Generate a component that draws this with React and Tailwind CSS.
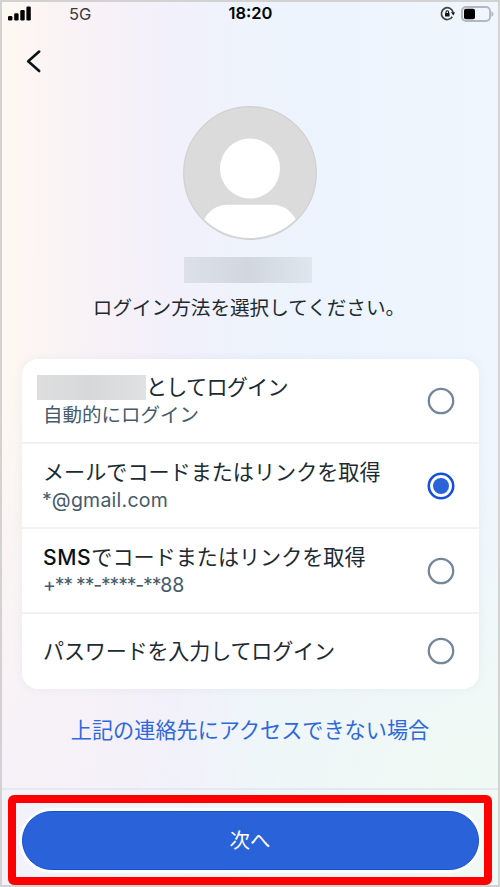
import React, { useState } from 'react';
import clsx from 'clsx';

const OPTIONS = [
  { id: 'auto',     title: 'としてログイン', sub: '自動的にログイン', masked: true, titleClass: 'tracking-[-0.75px]' },
  { id: 'email',    title: 'メールでコードまたはリンクを取得', sub: '*@gmail.com', subClass: 'tracking-[0.25px] -ml-px' },
  { id: 'sms',      prefix: 'SMS', title: 'でコードまたはリンクを取得', sub: '+** **-****-**', subEnd: '88', subClass: 'tracking-[-1.2px]' },
  { id: 'password', title: 'パスワードを入力してログイン', titleClass: 'tracking-[-0.2px]' },
];

export default function App() {
  const [selected, setSelected] = useState('email');

  return (
    <div className="w-[500px] h-[887px] overflow-hidden flex flex-col border-2 border-[#d2d2d2] font-['Inter','Noto_Sans_CJK_JP',sans-serif] text-[#1c2b33] bg-[radial-gradient(ellipse_75%_40%_at_100%_92%,#f0faf2_0%,#f0faf200_100%),radial-gradient(ellipse_50%_55%_at_0%_100%,#f3f0f9_0%,#f3f0f900_100%),linear-gradient(to_right,#fef8f2_0%,#fbf4f5_10%,#f6f1f8_24%,#f2f0fb_34%,#eef3fc_50%,#edf4fd_70%,#eff6fe_100%)]">
      <StatusBar />

      {/* Back */}
      <div className="h-[65px] pl-[24px] pt-[25px]">
        <button className="block" aria-label="戻る">
          <svg width="16" height="24" viewBox="0 0 16 24" fill="none">
            <path d="M13.2 2.6L2.2 12.3L13.2 22" stroke="#0a1317" strokeWidth="2.6" strokeLinecap="round" strokeLinejoin="round" />
          </svg>
        </button>
      </div>

      {/* Profile */}
      <div className="flex flex-col items-center pt-[17px]">
        <Avatar />
        <div className="mt-[17px] mr-[4px] w-[128px] h-[26px] bg-linear-to-r from-[#dce1e9] via-[#d1d6df] to-[#dfe6ee]" />
        <h1 className="mt-[11px] mr-[2px] text-[19.6px] leading-[28px] whitespace-nowrap">
          ログイン方法を選択してください。
        </h1>
      </div>

      {/* Login methods */}
      <div className="mx-[19.5px] mt-[37px] h-[330px] shrink-0 bg-white rounded-[16px] shadow-[0_0_10px_rgba(90,110,160,0.08)] overflow-hidden">
        {OPTIONS.map(option => (
          <OptionRow
            key={option.id}
            option={option}
            checked={selected === option.id}
            onSelect={() => setSelected(option.id)}
          />
        ))}
      </div>

      <a className="mt-[27px] text-center text-[21.15px] leading-[30px] text-[#2f68dc] whitespace-nowrap cursor-pointer">
        上記の連絡先にアクセスできない場合
      </a>

      {/* Footer */}
      <div className="mt-auto h-[97px] shrink-0 border-t-2 border-[#e4e9f1] px-[6px] pt-[5px]">
        <div className="h-[90px] rounded-[6px] border-8 border-[#ff0000] bg-linear-to-r from-[#f1f2fa] to-[#f0f9f4] px-[5.5px] py-[7.5px]">
          <button className="w-full h-[59px] pt-[2px] rounded-full border border-[#1250d8] bg-[#2962d9] ring-3 ring-white/80 text-white text-[20.5px] leading-[30px]">
            次へ
          </button>
        </div>
      </div>
    </div>
  );
}

/* ── Status bar ── */
function StatusBar() {
  return (
    <div className="h-[22px] grid grid-cols-3 items-center pl-[6px] pr-[4px] text-black">
      <div className="flex items-center">
        <svg width="23" height="15" viewBox="0 0 23 15">
          <rect x="0" y="10" width="4.4" height="4.5" rx="1.3" />
          <rect x="6.2" y="7.2" width="4.4" height="7.3" rx="1.3" />
          <rect x="12.3" y="4" width="4.4" height="10.5" rx="1.3" />
          <rect x="18.4" y="0.5" width="4.4" height="14" rx="1.3" />
        </svg>
        <span className="ml-[38px] text-[16.5px] leading-[22px] text-[#3a3a40]">5G</span>
      </div>
      <span className="pr-px text-center text-[16.5px] leading-[23px] font-semibold">18:20</span>
      <div className="flex items-center justify-end gap-[6px]">
        {/* rotation lock */}
        <svg width="15" height="15" viewBox="0 0 15 15" fill="none">
          <path d="M12.3 10.8A5.9 5.9 0 1 1 13.1 6.4" stroke="#444" strokeWidth="1.7" />
          <path d="M10.9 6.2h4.1l-1.6 3.2z" fill="#111" />
          <rect x="5" y="7" width="4.6" height="3.6" rx="0.7" fill="#111" />
          <path d="M6 7V6a1.3 1.3 0 0 1 2.6 0V7" stroke="#111" strokeWidth="1.1" />
        </svg>
        <svg width="33" height="16" viewBox="0 0 33 16" fill="none">
          <rect x="1" y="1" width="28" height="14" rx="4" stroke="#b4b7bb" strokeWidth="1.9" />
          <path d="M30.4 5.2v5.6c1.4-.6 2.1-1.6 2.1-2.8s-.7-2.2-2.1-2.8z" fill="#b4b7bb" />
          <rect x="3" y="2.8" width="11" height="10.4" rx="2" fill="#000" />
        </svg>
      </div>
    </div>
  );
}

/* ── Default profile picture ── */
function Avatar() {
  return (
    <svg width="134" height="134" viewBox="0 0 134 134">
      <defs>
        <clipPath id="avatar-clip">
          <circle cx="67" cy="67" r="65" />
        </clipPath>
      </defs>
      <circle cx="67" cy="67" r="66.3" fill="#dbdbdb" stroke="#d0d0d0" strokeWidth="1.2" />
      <circle cx="67" cy="62.5" r="30" fill="#fff" />
      <path d="M17 122C24 104 34 98.8 46 98.8H88C100 98.8 110 104 117 122V140H17Z" fill="#fff" clipPath="url(#avatar-clip)" />
    </svg>
  );
}

/* ── One login method ── */
function OptionRow({ option, checked, onSelect }) {
  return (
    <button
      onClick={onSelect}
      className="w-full h-[85px] last:h-[73px] flex items-center justify-between pl-[21.5px] pr-[24.5px] text-left border-b-2 last:border-b-0 border-[#f0f2f5]"
    >
      <div className="pt-[2px] whitespace-nowrap">
        <div className={clsx('flex items-center text-[21.1px] leading-[27px]', option.titleClass)}>
          {option.masked && (
            <span className="-ml-[6px] w-[109px] h-[25px] bg-linear-to-r from-[#dedede] via-[#d6d8da] to-[#e0e1e2]" />
          )}
          {option.prefix && <span className="font-medium text-[#0a1317] tracking-[0.6px]">{option.prefix}</span>}
          {option.title}
        </div>
        {option.sub && (
          <div className="text-[19.5px] leading-[28px] text-[#465a69]">
            <span className={option.subClass}>{option.sub}</span>
            {option.subEnd}
          </div>
        )}
      </div>
      <Radio checked={checked} />
    </button>
  );
}

function Radio({ checked }) {
  return (
    <svg width="28" height="28" viewBox="0 0 28 28" fill="none" className="mt-px -mr-px shrink-0">
      <circle cx="14" cy="14" r="12.2" stroke={checked ? '#1450dc' : '#76869a'} strokeWidth={checked ? 2.6 : 2.3} />
      {checked && <circle cx="14" cy="14" r="8" fill="#2962d9" />}
    </svg>
  );
}
